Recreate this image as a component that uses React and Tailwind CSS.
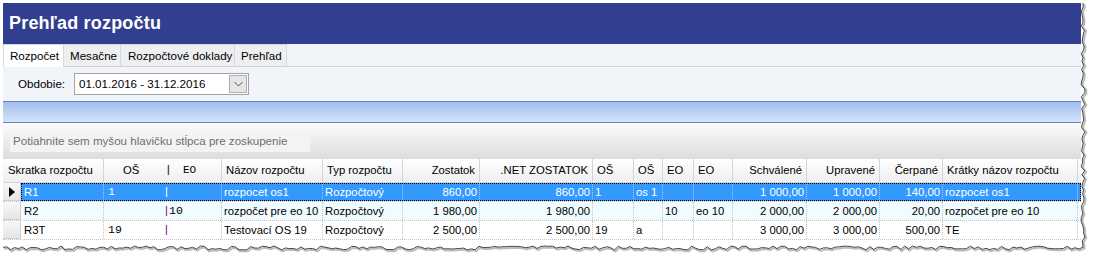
import React from 'react';

// stĺpce mriežky: šírka, zarovnanie
const columns = [
  { key: 'nazov', title: 'Názov rozpočtu', w: 'w-[101px]', right: false },
  { key: 'typ', title: 'Typ rozpočtu', w: 'w-[80px]', right: false },
  { key: 'zostatok', title: 'Zostatok', w: 'w-[77px]', right: true },
  { key: 'net', title: '.NET ZOSTATOK', w: 'w-[113px]', right: true },
  { key: 'os1', title: 'OŠ', w: 'w-[41px]', right: false },
  { key: 'os2', title: 'OŠ', w: 'w-[29px]', right: false },
  { key: 'eo1', title: 'EO', w: 'w-[31px]', right: false },
  { key: 'eo2', title: 'EO', w: 'w-[39px]', right: false },
  { key: 'schvalene', title: 'Schválené', w: 'w-[74px]', right: true },
  { key: 'upravene', title: 'Upravené', w: 'w-[73px]', right: true },
  { key: 'cerpane', title: 'Čerpané', w: 'w-[63px]', right: true },
  { key: 'kratky', title: 'Krátky názov rozpočtu', w: 'w-[135px]', right: false },
];

const rows = [
  {
    skratka: 'R1', os: '1', eo: '', nazov: 'rozpocet os1', typ: 'Rozpočtový', zostatok: '860,00', net: '860,00',
    os1: '1', os2: 'os 1', eo1: '', eo2: '', schvalene: '1 000,00', upravene: '1 000,00', cerpane: '140,00', kratky: 'rozpocet os1',
  },
  {
    skratka: 'R2', os: '', eo: '10', nazov: 'rozpočet pre eo 10', typ: 'Rozpočtový', zostatok: '1 980,00', net: '1 980,00',
    os1: '', os2: '', eo1: '10', eo2: 'eo 10', schvalene: '2 000,00', upravene: '2 000,00', cerpane: '20,00', kratky: 'rozpočet pre eo 10',
  },
  {
    skratka: 'R3T', os: '19', eo: '', nazov: 'Testovací OS 19', typ: 'Rozpočtový', zostatok: '2 500,00', net: '2 500,00',
    os1: '19', os2: 'a', eo1: '', eo2: '', schvalene: '3 000,00', upravene: '3 000,00', cerpane: '500,00', kratky: 'TE',
  },
];

// roztrhnutý okraj – pseudo náhodné body
function jag(count, seed) {
  const out = [];
  let s = seed;
  for (let i = 0; i < count; i++) {
    s = (s * 9301 + 49297) % 233280;
    out.push(s / 233280);
  }
  return out;
}

const rightPts = jag(64, 7)
  .map((r, i) => `${1081 + r * 4},${3 + i * 3.9}`)
  .join(' ');
const bottomPts = jag(280, 3)
  .map((r, i) => `${3 + i * 3.87},${246 + r * 4}`)
  .join(' ');

const HeaderCell = ({ children, className = '' }) => (
  <div
    className={`h-full flex items-center px-[4px] border-r border-[#d5d5d5] bg-gradient-to-b from-white to-[#eeeeee] shrink-0 whitespace-nowrap ${className}`}
  >
    {children}
  </div>
);

const App = () => {
  return (
    <div className="w-[1094px] h-[262px] bg-white relative overflow-hidden font-['Liberation_Sans',Arial,sans-serif] text-[11.3px] text-black">
      <div className="ml-[3px] mt-[3px] w-[1078px] flex flex-col">
        {/* hlavička */}
        <div className="h-[41px] bg-[#323e8f] flex items-center pl-[6px]">
          <h1 className="text-white font-bold text-[18px] tracking-[0.2px]">Prehľad rozpočtu</h1>
        </div>

        {/* záložky */}
        <div className="h-[23px] bg-[#f1f4f9] flex items-end border-b border-[#d4d4d4] whitespace-nowrap text-[11.6px]">
          <div className="h-[23px] w-[61px] bg-white border border-b-0 border-[#d9d9d9] flex items-center pl-[6px] -mb-px">
            Rozpočet
          </div>
          <div className="h-[22px] w-[57px] bg-[#eeeff1] border border-l-0 border-b-0 border-[#d9d9d9] flex items-center pl-[6px]">
            Mesačne
          </div>
          <div className="h-[22px] w-[114px] bg-[#eeeff1] border border-l-0 border-b-0 border-[#d9d9d9] flex items-center pl-[7px]">
            Rozpočtové doklady
          </div>
          <div className="h-[22px] w-[52px] bg-[#eeeff1] border border-l-0 border-b-0 border-[#d9d9d9] flex items-center pl-[6px]">
            Prehľad
          </div>
        </div>

        {/* obdobie */}
        <div className="h-[34px] bg-[#f1f4f9] flex items-center pl-[15px] text-[11.6px]">
          <span className="w-[56px]">Obdobie:</span>
          <div className="w-[175px] h-[22px] bg-white border border-[#a3a3a3] flex items-center justify-between pl-[4px] pr-[1px]">
            <span>01.01.2016 - 31.12.2016</span>
            <div className="w-[18px] h-[18px] bg-[#e6e6e6] border border-[#adadad] flex items-center justify-center">
              <svg width="9" height="6" viewBox="0 0 9 6">
                <polyline points="0.5,1 4.5,5 8.5,1" fill="none" stroke="#555" strokeWidth="1" />
              </svg>
            </div>
          </div>
        </div>

        {/* modrý pás */}
        <div className="h-[22px] border-y border-[#6184b9] bg-gradient-to-b from-[#a4bfee] to-[#d2e3f9]" />

        {/* panel zoskupenia */}
        <div className="h-[36px] bg-gradient-to-b from-[#fcfcfc] to-[#dcdcdc] flex items-center pl-[7px]">
          <div className="w-[300px] h-[21px] bg-[#f3f3f3] flex items-center pl-[3px] text-[#6f6f6f] text-[11.6px]">
            Potiahnite sem myšou hlavičku stĺpca pre zoskupenie
          </div>
        </div>

        {/* mriežka */}
        <div className="bg-white h-[88px]">
          <div className="h-[24px] flex border-b border-[#d5d5d5]">
            <HeaderCell className="w-[101px] pl-[5px]">Skratka rozpočtu</HeaderCell>
            <HeaderCell className="w-[118px] pl-[19px]">
              <span className="w-[42px]">OŠ</span>
              <span className="w-[18px] font-['Liberation_Mono',monospace] text-[11px]">|</span>
              <span className="font-['Liberation_Mono',monospace] text-[11px]">EO</span>
            </HeaderCell>
            {columns.map((c) => (
              <HeaderCell key={c.key} className={`${c.w} ${c.right ? 'justify-end' : ''}`}>
                {c.title}
              </HeaderCell>
            ))}
            <div className="flex-1 bg-gradient-to-b from-white to-[#eeeeee]" />
          </div>

          {rows.map((r, i) => {
            const sel = i === 0;
            const rowBg = sel ? 'bg-[#3399ff] text-white outline-1 outline-dotted outline-black -outline-offset-1' : i === 1 ? 'bg-[#f0fcff]' : 'bg-white';
            const sep = sel ? 'border-r border-dotted border-[#9fcaf5]' : 'border-r border-dotted border-[#c4c4c4]';
            return (
              <div key={r.skratka} className="h-[19px] flex border-b border-dotted border-[#c4c4c4]">
                <div className="w-[18px] shrink-0 bg-gradient-to-b from-[#f7f7f7] to-[#e6e6e6] border-r border-b border-[#cfcfcf] flex items-center justify-center">
                  {sel && (
                    <svg width="6" height="10" viewBox="0 0 6 10">
                      <polygon points="0,0 6,5 0,10" fill="#000" />
                    </svg>
                  )}
                </div>
                <div className={`flex flex-1 ${rowBg}`}>
                  <div className={`w-[83px] shrink-0 pl-[3px] flex items-center ${sep}`}>{r.skratka}</div>
                  <div className={`w-[118px] shrink-0 pl-[4px] flex items-center font-['Liberation_Mono',monospace] text-[11.5px] ${sep}`}>
                    <span className="w-[55px]">{r.os}</span>
                    <span className={`w-[6px] ${sel ? 'text-white' : 'text-[#800080]'}`}>|</span>
                    <span>{r.eo}</span>
                  </div>
                  {columns.map((c) => (
                    <div
                      key={c.key}
                      className={`${c.w} shrink-0 flex items-center px-[2px] whitespace-nowrap overflow-hidden ${c.right ? 'justify-end' : ''} ${sep}`}
                    >
                      {r[c.key]}
                    </div>
                  ))}
                </div>
              </div>
            );
          })}
        </div>
      </div>

      {/* roztrhnutý okraj */}
      <svg className="absolute left-0 top-0" width="1094" height="262">
        <polygon points={`1080,0 ${rightPts} 1094,262 1094,0`} fill="#fff" />
        <polyline points={rightPts} fill="none" stroke="#bbb" strokeWidth="2" transform="translate(1.5,1)" />
        <polyline points={rightPts} fill="none" stroke="#444" strokeWidth="1" />
        <polygon points={`0,262 ${bottomPts} 1094,262`} fill="#fff" />
        <polyline points={bottomPts} fill="none" stroke="#bbb" strokeWidth="2" transform="translate(1,1.5)" />
        <polyline points={bottomPts} fill="none" stroke="#444" strokeWidth="1" />
      </svg>
    </div>
  );
};

export default App;
